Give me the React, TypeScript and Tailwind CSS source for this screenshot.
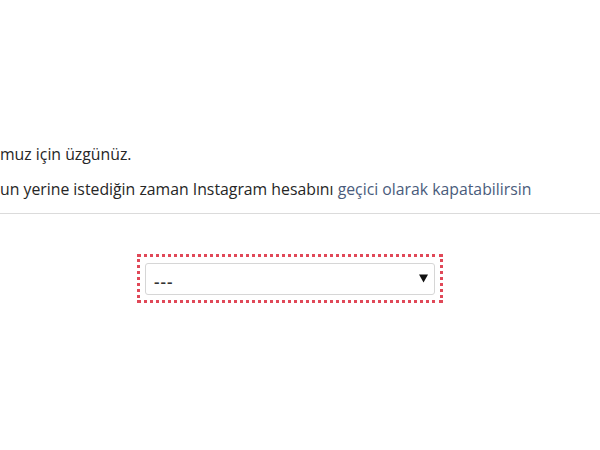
const App = () => {
    return (
        <div className="w-[600px] h-[450px] bg-white overflow-hidden" style={{ fontFamily: '"Open Sans", "Noto Sans", sans-serif' }}>
            <div className="pt-[143px] text-[15.8px] text-[#262626] whitespace-nowrap">
                <p className="leading-[22px]">muz için üzgünüz.</p>
                <p className="mt-[13px] leading-[22px]">
                    un yerine istediğin zaman Instagram hesabını <span className="text-[#4a5c7c]">geçici olarak kapatabilirsin</span>
                </p>
            </div>
            <div className="mt-[13px] border-t border-[#dbdbdb]" />
            <div className="pt-[40px] pl-[137px]">
                <div className="w-[306px] h-[49px] border-[3px] border-dotted border-[#e04858] px-[5px] pt-[6px] pb-[5px]">
                    <div className="h-full flex items-center justify-between border border-[#d6d6d6] rounded-[3px] pl-[8px] pr-[6px] bg-white">
                        <span className="text-[17px] font-semibold text-[#333] tracking-[1px] pt-[5px]">---</span>
                        <svg width="9" height="9" viewBox="0 0 9 9" className="mb-[2px]">
                            <path d="M0 0.5 H9 L4.5 8.5 Z" fill="#111" />
                        </svg>
                    </div>
                </div>
            </div>
        </div>
    );
};

export default App;
